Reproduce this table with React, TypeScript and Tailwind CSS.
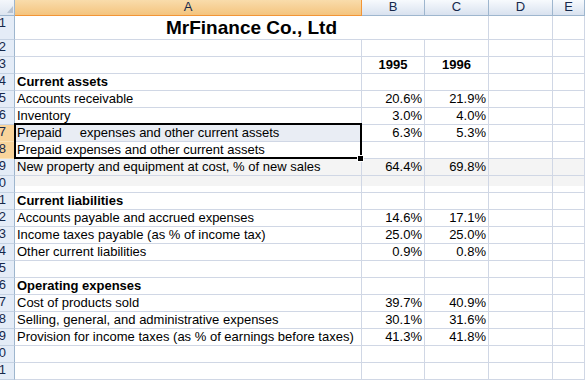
import React from 'react'

type Row = {
  n: number
  a?: string
  b?: string
  c?: string
  bold?: boolean
  center?: boolean
}

const rows: Row[] = [
  { n: 2 },
  { n: 3, b: '1995', c: '1996', bold: true, center: true },
  { n: 4, a: 'Current assets', bold: true },
  { n: 5, a: 'Accounts receivable', b: '20.6%', c: '21.9%' },
  { n: 6, a: 'Inventory', b: '3.0%', c: '4.0%' },
  { n: 7, a: 'Prepaid     expenses and other current assets', b: '6.3%', c: '5.3%' },
  { n: 8, a: 'Prepaid expenses and other current assets' },
  { n: 9, a: 'New property and equipment at cost, % of new sales', b: '64.4%', c: '69.8%' },
  { n: 10 },
  { n: 11, a: 'Current liabilities', bold: true },
  { n: 12, a: 'Accounts payable and accrued expenses', b: '14.6%', c: '17.1%' },
  { n: 13, a: 'Income taxes payable (as % of income tax)', b: '25.0%', c: '25.0%' },
  { n: 14, a: 'Other current liabilities', b: '0.9%', c: '0.8%' },
  { n: 15 },
  { n: 16, a: 'Operating expenses', bold: true },
  { n: 17, a: 'Cost of products sold', b: '39.7%', c: '40.9%' },
  { n: 18, a: 'Selling, general, and administrative expenses', b: '30.1%', c: '31.6%' },
  { n: 19, a: 'Provision for income taxes (as % of earnings before taxes)', b: '41.3%', c: '41.8%' },
  { n: 20 },
  { n: 21 },
]

const cols = 'grid grid-cols-[15px_347px_63px_64px_64px_1fr]'
const cell = 'border-r border-b border-[#d0d7e5] overflow-hidden whitespace-pre leading-[16px]'

function RowHead({ n, selected }: { n: number; selected?: boolean }) {
  return (
    <div
      className={
        selected
          ? 'flex justify-end overflow-hidden pr-[8px] border-r border-b border-r-[#f29536] border-b-[#fbe3b8] bg-[#f9d49b] leading-[12px] text-[#15284b]'
          : 'flex justify-end overflow-hidden pr-[8px] border-r border-b border-r-[#9eb6ce] border-b-[#c5d2e3] bg-[#e4ecf7] leading-[12px] text-[#15284b]'
      }
    >
      <span className="pt-[1px]">{n}</span>
    </div>
  )
}

function ColHead({ label, selected }: { label: string; selected?: boolean }) {
  return (
    <div
      className={
        selected
          ? 'flex justify-center border-r border-b border-r-[#f29536] border-b-[#f29536] bg-gradient-to-b from-[#f9dcab] to-[#f4c47e] leading-[14px] text-[#15284b]'
          : 'flex justify-center border-r border-b border-[#9eb6ce] bg-gradient-to-b from-[#f7fafd] to-[#d9e2ef] leading-[14px] text-[#15284b]'
      }
    >
      {label}
    </div>
  )
}

export default function App() {
  return (
    <div className="relative h-[380px] w-[585px] overflow-hidden bg-white text-[13px] text-black [font-family:'Liberation_Sans',Arial,sans-serif]">
      <div className={`${cols} h-[16px]`}>
        <div className="flex items-end justify-end border-r border-b border-[#9eb6ce] bg-gradient-to-b from-[#f4f7fb] to-[#dde5f0] pb-[2px] pr-[1px]">
          <svg width="6" height="7" viewBox="0 0 6 7">
            <polygon points="6,0 6,7 0,7" fill="#b8c3d2" />
          </svg>
        </div>
        <ColHead label="A" selected />
        <ColHead label="B" />
        <ColHead label="C" />
        <ColHead label="D" />
        <ColHead label="E" />
      </div>

      <div className={`${cols} h-[24px]`}>
        <RowHead n={1} />
        <div className="col-span-3 flex items-end justify-center border-r border-b border-[#d0d7e5] text-[19px] font-bold leading-[22px]">
          MrFinance Co., Ltd
        </div>
        <div className={cell} />
        <div className={cell} />
      </div>

      {rows.map((r) => {
        const sel = r.n === 7 || r.n === 8
        const band =
          r.n === 9
            ? 'bg-[#f4f4f4]'
            : r.n === 10
              ? 'bg-[linear-gradient(#f4f4f4_0_60%,#ffffff_60%)]'
              : ''
        const aBg = r.n === 7 ? 'bg-[#e9edf4]' : band
        const num = r.center ? 'text-center' : 'text-right pr-[2px]'
        return (
          <div key={r.n} className={`${cols} h-[17px]`}>
            <RowHead n={r.n} selected={sel} />
            <div className={`${cell} ${aBg} pl-[2px] ${r.bold ? 'font-bold' : ''}`}>{r.a}</div>
            <div className={`${cell} ${band} ${num} ${r.bold ? 'font-bold' : ''}`}>{r.b}</div>
            <div className={`${cell} ${band} ${num} ${r.bold ? 'font-bold' : ''}`}>{r.c}</div>
            <div className={`${cell} ${band}`} />
            <div className={`${cell} ${band}`} />
          </div>
        )
      })}

      {/* selection A7:A8 */}
      <div className="pointer-events-none absolute left-[14px] top-[123px] h-[36px] w-[348px] border-2 border-black" />
      <div className="absolute left-[357px] top-[155px] h-[7px] w-[7px] border border-white bg-black" />
    </div>
  )
}
